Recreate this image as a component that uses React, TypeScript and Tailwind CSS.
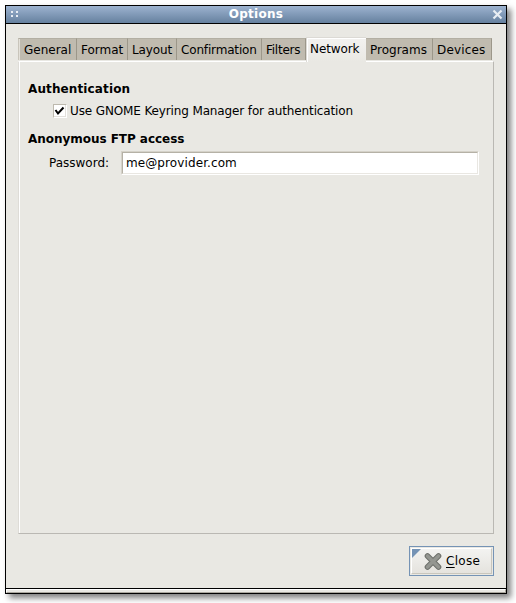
import React from "react";

type Tab = { label: string; box: string; active?: boolean };

const tabs: Tab[] = [
  { label: "General", box: "w-[59px] pl-[5px] border-l border-l-[#c9c5bb] shadow-[inset_1px_0_0_#e3e0d9]" },
  { label: "Format", box: "w-[51px] pl-[4px]" },
  { label: "Layout", box: "w-[49px] pl-[4px] tracking-[-0.1px]" },
  { label: "Confirmation", box: "w-[85px] pl-[4px] tracking-[-0.16px]" },
  { label: "Filters", box: "w-[44px] pl-[4px] tracking-[-0.25px]" },
  { label: "Network", box: "w-[60px] pl-[3px] tracking-[-0.1px]", active: true },
  { label: "Programs", box: "w-[67px] pl-[4px]" },
  { label: "Devices", box: "w-[59px] pl-[4px] tracking-[0.18px]" },
];

function TitleBar() {
  return (
    <div className="flex h-[18px] shrink-0 items-start border-b border-black bg-linear-to-b from-[#9db3d0] to-[#66819f] text-white">
      <svg width="20" height="17" viewBox="0 0 20 17" fill="#e8edf3" shapeRendering="crispEdges">
        <path d="M5 5h2v2H5zM10 5h2v2h-2zM5 9h2v2H5zM10 9h2v2h-2z" />
      </svg>
      <div className="flex-1 text-center text-[12px] leading-[16px] font-bold tracking-[0.25px]">Options</div>
      <svg width="20" height="17" viewBox="0 0 20 17" stroke="#e8edf3" strokeWidth="2.2">
        <path d="M7.5 4.5l8 8M15.500 4.500l-8 8" />
      </svg>
    </div>
  );
}

function TabItem({ label, box, active }: Tab) {
  if (active) {
    return (
      <div className={`relative z-10 h-[25px] shrink-0 border-t border-l border-[#dcdad5] bg-linear-to-b from-[#f3f2f0] to-[#e9e8e3] pt-[3px] shadow-[inset_1px_1px_0_#fff] ${box}`}>
        {label}
      </div>
    );
  }
  return (
    <div className={`mb-[2px] h-[22px] shrink-0 border-t border-r border-t-[#b3afa3] border-r-[#9c978a] bg-[#c0bbaf] pt-[3px] ${box}`}>
      {label}
    </div>
  );
}

export default function App() {
  return (
    <div className="h-[603px] w-[516px] overflow-hidden bg-white pt-[5px] pl-[5px] font-['DejaVu_Sans',sans-serif] text-[12px] leading-[16px] text-black">
      <div className="flex h-[589px] w-[502px] flex-col border border-black bg-[#e9e8e3] shadow-[4px_4px_6px_rgba(0,0,0,0.5)]">
        <TitleBar />
        <main className="flex h-[564px] flex-col px-[12px] pt-[14px]">
          <div className="flex h-[24px] items-end">
            {tabs.map((tab) => (
              <TabItem key={tab.label} {...tab} />
            ))}
          </div>
          <section className="-mt-px h-[473px] w-[476px] border-t border-r border-b border-l border-t-white border-r-[#bab8b3] border-b-[#bab8b3] border-l-[#dedcd7] pt-[19px] pl-[9px] shadow-[inset_1px_0_0_#fff]">
            <h2 className="font-bold tracking-[0.12px]">Authentication</h2>
            <label className="mt-[6px] flex items-center pl-[25px] tracking-[-0.13px]">
              <span className="mr-[3px] flex h-[14px] w-[14px] items-center justify-center border border-t-[#bdb9ae] border-r-white border-b-white border-l-[#bdb9ae] bg-white shadow-[inset_-1px_-1px_0_#e3e1dc]">
                <svg width="12" height="12" viewBox="0 0 12 12" fill="none" stroke="#000" strokeWidth="2">
                  <path d="M1.500 5l2.500 3.500L9.500 2.500" />
                </svg>
              </span>
              Use GNOME Keyring Manager for authentication
            </label>
            <h2 className="mt-[12px] font-bold tracking-[-0.04px]">Anonymous FTP access</h2>
            <div className="mt-[4px] flex items-center pl-[21px]">
              <span className="w-[72px]">Password:</span>
              <div className="h-[24px] w-[358px] border border-t-[#d5d2c9] border-r-white border-b-white border-l-[#d5d2c9]">
                <div className="h-[22px] border border-t-[#b5b1a6] border-r-[#e9e7e2] border-b-[#e9e7e2] border-l-[#b5b1a6] bg-white pt-[2px] pl-[3px] tracking-[0.1px]">
                  me@provider.com
                </div>
              </div>
            </div>
          </section>
          <button className="mt-[12px] flex h-[30px] w-[85px] self-end border border-[#7593b5] p-px">
            <span className="flex h-full w-full items-center border border-t-white border-r-[#c9c6bd] border-b-[#c9c6bd] border-l-white bg-linear-to-b from-[#f3f3f1] to-[#e5e3de]">
              <svg width="34" height="24" viewBox="0 0 34 24">
                <path d="M0 0H9L0 9z" fill="#7593b5" />
                <path d="M15.500 7L26.500 18M26.500 7L15.500 18" stroke="#6d6f6a" strokeWidth="5.600" strokeLinecap="round" />
                <path d="M15.500 7L26.500 18M26.500 7L15.500 18" stroke="#949691" strokeWidth="3.600" strokeLinecap="round" />
              </svg>
              <span className="tracking-[0.3px]"><u className="underline-offset-2">C</u>lose</span>
            </span>
          </button>
        </main>
        <div className="h-[5px] border-t border-black">
          <div className="h-[4px] border border-t-white border-r-[#aaa79e] border-b-[#aaa79e] border-l-white" />
        </div>
      </div>
    </div>
  );
}
